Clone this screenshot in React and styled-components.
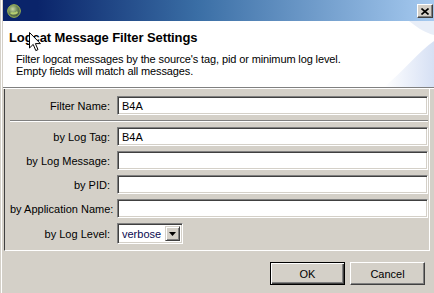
import React from "react";
import styled, { createGlobalStyle } from "styled-components";

const Global = createGlobalStyle`
  html, body {
    margin: 0;
    padding: 0;
    background: #d4d0c8;
    overflow: hidden;
  }
  body {
    font-family: "Liberation Sans", Arial, sans-serif;
    font-size: 11px;
    color: #000;
  }
`;

const Window = styled.div`
  position: relative;
  width: 434px;
  height: 293px;
  overflow: hidden;
  background: #d4d0c8;
  padding-left: 3px;
  box-sizing: border-box;
  box-shadow: inset 1px 0 0 #d4d0c8, inset 2px 0 0 #ffffff;
  display: flex;
  flex-direction: column;
`;

const TitleBar = styled.div`
  height: 21px;
  flex: none;
  display: flex;
  align-items: center;
  justify-content: space-between;
  padding: 0 1px 0 4px;
  background: linear-gradient(to right, #0a246a 0%, #0a246a 8%, #3a6ea5 45%, #a6caf0 100%);
`;

const CloseButton = styled.div`
  width: 16px;
  height: 14px;
  box-sizing: border-box;
  background: #d4d0c8;
  border: 1px solid;
  border-color: #ffffff #404040 #404040 #ffffff;
  box-shadow: inset -1px -1px 0 #808080;
  display: flex;
  align-items: center;
  justify-content: center;
  margin-top: 1px;
`;

const Header = styled.div`
  position: relative;
  height: 66px;
  flex: none;
  background: #ffffff;
  padding: 9px 0 0 6px;
  box-sizing: border-box;
  overflow: hidden;
`;

const Title = styled.div`
  font-weight: bold;
  font-size: 13px;
  line-height: 16px;
  letter-spacing: -0.1px;
`;

const Description = styled.div`
  margin: 7px 0 0 7px;
  line-height: 12px;
  font-size: 11px;
  letter-spacing: -0.12px;
`;

const Banner = styled.svg`
  position: absolute;
  right: 0;
  top: 0;
`;

const Cursor = styled.svg`
  position: absolute;
  left: 26px;
  top: 11px;
`;

const Etch = styled.div`
  height: 1px;
  flex: none;
  background: #808080;
  border-bottom: 1px solid #ffffff;
`;

const Panel = styled.div`
  margin: 0 4px 0 1px;
  border-left: 1px solid #404040;
  border-right: 1px solid #ffffff;
  border-bottom: 1px solid #ffffff;
  padding: 7px 1px 6px 5px;
  display: grid;
  grid-template-columns: 100px 1fr;
  column-gap: 7px;
  row-gap: 5px;
  align-items: center;
`;

const Label = styled.label`
  text-align: right;
  white-space: nowrap;
`;

const Field = styled.div`
  height: 19px;
  box-sizing: border-box;
  background: #ffffff;
  border: 1px solid;
  border-color: #808080 #ffffff #ffffff #808080;
  box-shadow: inset 1px 1px 0 #404040, inset -1px -1px 0 #d4d0c8;
  padding: 0 4px;
  display: flex;
  align-items: center;
`;

const GroupRule = styled.div`
  grid-column: 1 / -1;
  height: 1px;
  background: #808080;
  border-bottom: 1px solid #ffffff;
`;

const Combo = styled(Field)`
  width: 66px;
  height: 21px;
  padding: 0 2px 0 4px;
  justify-content: space-between;
  color: #0a0a50;
`;

const DropButton = styled.div`
  width: 15px;
  height: 15px;
  box-sizing: border-box;
  background: #d4d0c8;
  border: 1px solid;
  border-color: #d4d0c8 #404040 #404040 #d4d0c8;
  box-shadow: inset 1px 1px 0 #ffffff, inset -1px -1px 0 #808080;
  display: flex;
  align-items: center;
  justify-content: center;
`;

const ButtonBar = styled.div`
  flex: 1;
  display: flex;
  justify-content: flex-end;
  align-items: flex-start;
  gap: 5px;
  padding: 11px 9px 0 0;
`;

const Button = styled.button`
  width: 75px;
  height: 23px;
  box-sizing: border-box;
  font-family: "Liberation Sans", Arial, sans-serif;
  font-size: 11px;
  color: #000;
  background: #d4d0c8;
  padding: 0;
  border: 1px solid;
  border-color: ${(p) => (p.$default ? "#000000" : "#ffffff #404040 #404040 #ffffff")};
  box-shadow: ${(p) =>
    p.$default
      ? "inset 1px 1px 0 #ffffff, inset -1px -1px 0 #404040, inset -2px -2px 0 #808080"
      : "inset -1px -1px 0 #808080"};
`;

const rows = [
  { label: "by Log Tag:", value: "B4A" },
  { label: "by Log Message:", value: "" },
  { label: "by PID:", value: "" },
  { label: "by Application Name:", value: "" },
];

export default function App() {
  return (
    <>
      <Global />
      <Window>
        <TitleBar>
          <svg width="14" height="14" viewBox="0 0 14 14">
            <defs>
              <radialGradient id="globe" cx="0.4" cy="0.35" r="0.7">
                <stop offset="0" stopColor="#c8d8a0" />
                <stop offset="0.5" stopColor="#6f8a5a" />
                <stop offset="1" stopColor="#3c4a3a" />
              </radialGradient>
            </defs>
            <circle cx="7" cy="7" r="6.3" fill="url(#globe)" stroke="#a8c050" strokeWidth="1" />
            <path d="M3 9 C5 7 7 10 10 7 L11 9 C8 11 5 11 3 9 Z" fill="#b8d070" />
          </svg>
          <CloseButton>
            <svg width="8" height="7" viewBox="0 0 8 7">
              <path d="M0.5 0.5 L7.5 6.5 M7.5 0.5 L0.5 6.5" stroke="#000" strokeWidth="1.6" />
            </svg>
          </CloseButton>
        </TitleBar>
        <Header>
          <Banner width="70" height="66" viewBox="0 0 70 66">
            <defs>
              <linearGradient id="swoosh" x1="0" y1="0" x2="1" y2="0">
                <stop offset="0" stopColor="#ffffff" />
                <stop offset="1" stopColor="#d6e0f4" />
              </linearGradient>
            </defs>
            <path d="M20 66 C40 50 55 30 70 20 L70 66 Z" fill="url(#swoosh)" />
            <path d="M45 0 C55 8 62 12 70 14 L70 0 Z" fill="#e8eef8" />
          </Banner>
          <Title>Logcat Message Filter Settings</Title>
          <Description>
            Filter logcat messages by the source's tag, pid or minimum log level.
            <br />
            Empty fields will match all messages.
          </Description>
          <Cursor width="13" height="20" viewBox="0 0 13 20">
            <path
              d="M0.5 0.5 L0.5 16 L4.2 12.4 L6.8 18.6 L9 17.6 L6.4 11.6 L11.4 11.6 Z"
              fill="#ffffff"
              stroke="#000"
              strokeWidth="1"
            />
          </Cursor>
        </Header>
        <Etch />
        <Panel>
          <Label>Filter Name:</Label>
          <Field>B4A</Field>
          <GroupRule />
          {rows.map((r) => (
            <React.Fragment key={r.label}>
              <Label>{r.label}</Label>
              <Field>{r.value}</Field>
            </React.Fragment>
          ))}
          <Label>by Log Level:</Label>
          <Combo>
            verbose
            <DropButton>
              <svg width="7" height="4" viewBox="0 0 7 4">
                <path d="M0 0 L7 0 L3.5 4 Z" fill="#000" />
              </svg>
            </DropButton>
          </Combo>
        </Panel>
        <ButtonBar>
          <Button $default>OK</Button>
          <Button>Cancel</Button>
        </ButtonBar>
      </Window>
    </>
  );
}
